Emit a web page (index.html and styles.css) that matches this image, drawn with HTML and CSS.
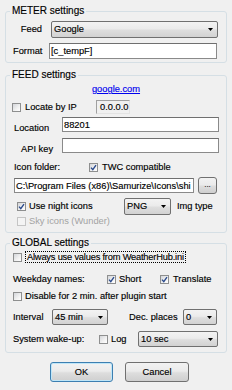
FILE: index.html
```html
<!DOCTYPE html>
<html>
<head>
<meta charset="utf-8">
<link rel="stylesheet" href="styles.css">
</head>
<body>
<fieldset class="group g1">
  <legend>METER settings</legend>
  <div class="row r-feed">
    <span class="lbl lbl-feed">Feed</span>
    <div class="combo c-feed"><span class="val">Google</span><svg class="arrow" width="5" height="3" viewBox="0 0 5 3"><path d="M0 0H5L2.5 3z"/></svg></div>
  </div>
  <div class="row r-format">
    <span class="lbl lbl-format">Format</span>
    <div class="edit e-format">[c_tempF]</div>
  </div>
</fieldset>

<fieldset class="group g2">
  <legend>FEED settings</legend>
  <div class="link-row"><a class="link" href="#">google.com</a></div>
  <div class="row r-locate">
    <span class="cb cb-locate"></span>
    <span class="lbl lbl-locate">Locate by IP</span>
    <span class="ip">0.0.0.0</span>
  </div>
  <div class="row r-location">
    <span class="lbl lbl-location">Location</span>
    <div class="edit e-location">88201</div>
  </div>
  <div class="row r-api">
    <span class="lbl lbl-api">API key</span>
    <div class="edit e-api"></div>
  </div>
  <div class="row r-icon">
    <span class="lbl lbl-icon">Icon folder:</span>
    <span class="cb checked"><svg viewBox="0 0 7 7"><path d="M1 3.6L2.8 5.6L6 1.2"/></svg></span>
    <span class="lbl lbl-twc">TWC compatible</span>
  </div>
  <div class="row r-path">
    <div class="edit e-path">C:\Program Files (x86)\Samurize\Icons\shi</div>
    <div class="btn btn-browse">...</div>
  </div>
  <div class="row r-night">
    <span class="cb checked cb-night"><svg viewBox="0 0 7 7"><path d="M1 3.6L2.8 5.6L6 1.2"/></svg></span>
    <span class="lbl lbl-night">Use night icons</span>
    <div class="combo c-png"><span class="val">PNG</span><svg class="arrow" width="5" height="3" viewBox="0 0 5 3"><path d="M0 0H5L2.5 3z"/></svg></div>
    <span class="lbl lbl-img">Img type</span>
  </div>
  <div class="row r-sky">
    <span class="cb disabled cb-sky"></span>
    <span class="lbl lbl-sky">Sky icons (Wunder)</span>
  </div>
</fieldset>

<fieldset class="group g3">
  <legend>GLOBAL settings</legend>
  <div class="row r-always">
    <span class="cb cb-left"></span>
    <span class="lbl lbl-always">Always use values from WeatherHub.ini</span>
  </div>
  <div class="row r-week">
    <span class="lbl lbl-week">Weekday names:</span>
    <span class="cb checked"><svg viewBox="0 0 7 7"><path d="M1 3.6L2.8 5.6L6 1.2"/></svg></span>
    <span class="lbl lbl-short">Short</span>
    <span class="cb checked"><svg viewBox="0 0 7 7"><path d="M1 3.6L2.8 5.6L6 1.2"/></svg></span>
    <span class="lbl lbl-translate">Translate</span>
  </div>
  <div class="row r-disable">
    <span class="cb cb-left"></span>
    <span class="lbl lbl-disable">Disable for 2 min. after plugin start</span>
  </div>
  <div class="row r-interval">
    <span class="lbl lbl-interval">Interval</span>
    <div class="combo c-interval"><span class="val">45 min</span><svg class="arrow" width="5" height="3" viewBox="0 0 5 3"><path d="M0 0H5L2.5 3z"/></svg></div>
    <span class="lbl lbl-dec">Dec. places</span>
    <div class="combo c-dec"><span class="val">0</span><svg class="arrow" width="5" height="3" viewBox="0 0 5 3"><path d="M0 0H5L2.5 3z"/></svg></div>
  </div>
  <div class="row r-wake">
    <span class="lbl lbl-wake">System wake-up:</span>
    <span class="cb"></span>
    <span class="lbl lbl-log">Log</span>
    <div class="combo c-wake"><span class="val">10 sec</span><svg class="arrow" width="5" height="3" viewBox="0 0 5 3"><path d="M0 0H5L2.5 3z"/></svg></div>
  </div>
</fieldset>

<div class="buttons">
  <div class="btn btn-ok">OK</div>
  <div class="btn btn-cancel">Cancel</div>
</div>
</body>
</html>
```

FILE: styles.css
```css
* { box-sizing: border-box; }
html, body { margin: 0; padding: 0; }
body {
  background: #f0f0f0;
  font-family: "Liberation Sans", Arial, sans-serif;
  font-size: 9.3px;
  color: #000;
  width: 232px;
  height: 390px;
  overflow: hidden;
  -webkit-text-stroke: 0.15px #000;
}

/* group boxes */
.group {
  margin: 0 5px;
  padding: 0;
  border: 1px solid #d5dfe5;
  border-radius: 3px;
  min-width: 0;
}
.group legend {
  margin-left: 4px;
  padding: 0 2px;
  font-size: 10px;
  line-height: 12px;
}
.g1 { margin-top: 5px; padding-bottom: 3px; }
.g2 { margin-top: 6px; padding-bottom: 5px; }
.g3 { margin-top: 4px; padding-bottom: 5px; }

.row { display: flex; align-items: center; }
.lbl { line-height: 11px; white-space: nowrap; flex: none; }

/* controls */
.combo {
  display: flex;
  align-items: center;
  flex: none;
  border: 1px solid #707070;
  border-radius: 2px;
  background: linear-gradient(#f3f3f3 0%, #ebebeb 45%, #dedede 55%, #d2d2d2 100%);
  line-height: 11px;
}
.combo .val { padding-left: 2px; }
.combo .arrow { margin-left: auto; margin-right: 4px; fill: #000; flex: none; }

.edit {
  flex: none;
  background: #fff;
  border: 1px solid #8a8a8a;
  border-top-color: #6f6f6f;
  padding-left: 1px;
  line-height: 12px;
  white-space: nowrap;
  overflow: hidden;
  display: flex;
  align-items: center;
}

.cb {
  flex: none;
  width: 9px;
  height: 9px;
  border: 1px solid #8e8f8f;
  background: linear-gradient(135deg, #d4d6da 0%, #f2f2f2 60%, #ffffff 100%);
  display: flex;
  align-items: center;
  justify-content: center;
}
.cb svg { width: 7px; height: 7px; }
.cb svg path { fill: none; stroke: #2a4a8c; stroke-width: 1.4; }
.cb.disabled { border-color: #c5c5c5; background: #f4f4f4; }

.btn {
  flex: none;
  display: flex;
  align-items: center;
  justify-content: center;
  border: 1px solid #707070;
  border-radius: 3px;
  background: linear-gradient(#f2f2f2 0%, #ebebeb 45%, #dddddd 55%, #cfcfcf 100%);
  line-height: 11px;
}

/* group 1 */
.r-feed { margin-top: 4px; height: 17px; }
.lbl-feed { width: 36px; text-align: right; }
.c-feed { margin-left: 9px; width: 167px; height: 17px; }
.r-format { margin-top: 5px; height: 16px; }
.lbl-format { margin-left: 7px; width: 36px; }
.e-format { width: 168px; height: 16px; }

/* group 2 */
.link-row { margin-top: 2px; text-align: center; line-height: 12px; }
.link { color: #0000ee; text-decoration: underline; -webkit-text-stroke: 0.15px #0000ee; }
.r-locate { margin-top: 5px; height: 14px; }
.cb-locate { margin-left: 6px; }
.lbl-locate { margin-left: 4px; width: 71px; }
.ip {
  flex: none;
  width: 34px;
  height: 14px;
  border: 1px solid;
  border-color: #a0a0a0 #e3e3e3 #e3e3e3 #a0a0a0;
  padding-left: 3px;
  line-height: 12px;
}
.r-location { margin-top: 3px; height: 15px; }
.lbl-location { margin-left: 8px; width: 48px; align-self: flex-end; margin-bottom: -2px; }
.e-location { width: 157px; height: 15px; }
.r-api { margin-top: 6px; height: 15px; }
.lbl-api { margin-left: 15px; width: 41px; align-self: flex-end; margin-bottom: -2px; }
.e-api { width: 157px; height: 15px; }
.r-icon { margin-top: 9px; height: 11px; }
.lbl-icon { margin-left: 8px; width: 75px; }
.lbl-twc { margin-left: 4px; }
.r-path { margin-top: 4px; height: 17px; }
.e-path { margin-left: 8px; width: 180px; height: 15px; }
.btn-browse { margin-left: 4px; width: 19px; height: 17px; font-size: 8px; align-items: flex-end; padding-bottom: 3px; }
.r-night { margin-top: 4px; height: 17px; }
.cb-night { margin-left: 11px; }
.lbl-night { margin-left: 3px; width: 95px; }
.c-png { width: 47px; height: 17px; }
.c-png .arrow { margin-right: 4px; }
.lbl-img { margin-left: 6px; }
.r-sky { margin-top: 1px; height: 11px; }
.cb-sky { margin-left: 11px; }
.lbl-sky { margin-left: 3px; color: #a3a3a3; -webkit-text-stroke: 0; }

/* group 3 */
.cb-left { margin-left: 7px; }
.r-always { margin-top: 2px; height: 12px; }
.lbl-always { margin-left: 3px; border: 1px dotted #000; padding: 0 1px; line-height: 10px; letter-spacing: -0.2px; }
.r-week { margin-top: 10px; height: 12px; }
.lbl-week { margin-left: 7px; width: 94px; }
.lbl-short { margin-left: 3px; width: 41px; }
.lbl-translate { margin-left: 4px; }
.r-disable { margin-top: 5px; height: 12px; }
.lbl-disable { margin-left: 3px; }
.r-interval { margin-top: 7px; height: 16px; }
.lbl-interval { margin-left: 7px; width: 39px; }
.c-interval { width: 56px; height: 16px; }
.lbl-dec { margin-left: 21px; width: 54px; }
.c-dec { width: 34px; height: 16px; }
.r-wake { margin-top: 6px; height: 16px; }
.lbl-wake { margin-left: 7px; width: 86px; }
.lbl-log { margin-left: 3px; width: 27px; }
.c-wake { width: 80px; height: 16px; }

/* buttons */
.buttons { display: flex; gap: 12px; margin: 9px 0 0 50px; }
.btn-ok {
  width: 63px;
  height: 20px;
  border-color: #3c7fb1;
  box-shadow: inset 0 0 0 1px #bfe6f8;
}
.btn-cancel { width: 64px; height: 20px; }
```
